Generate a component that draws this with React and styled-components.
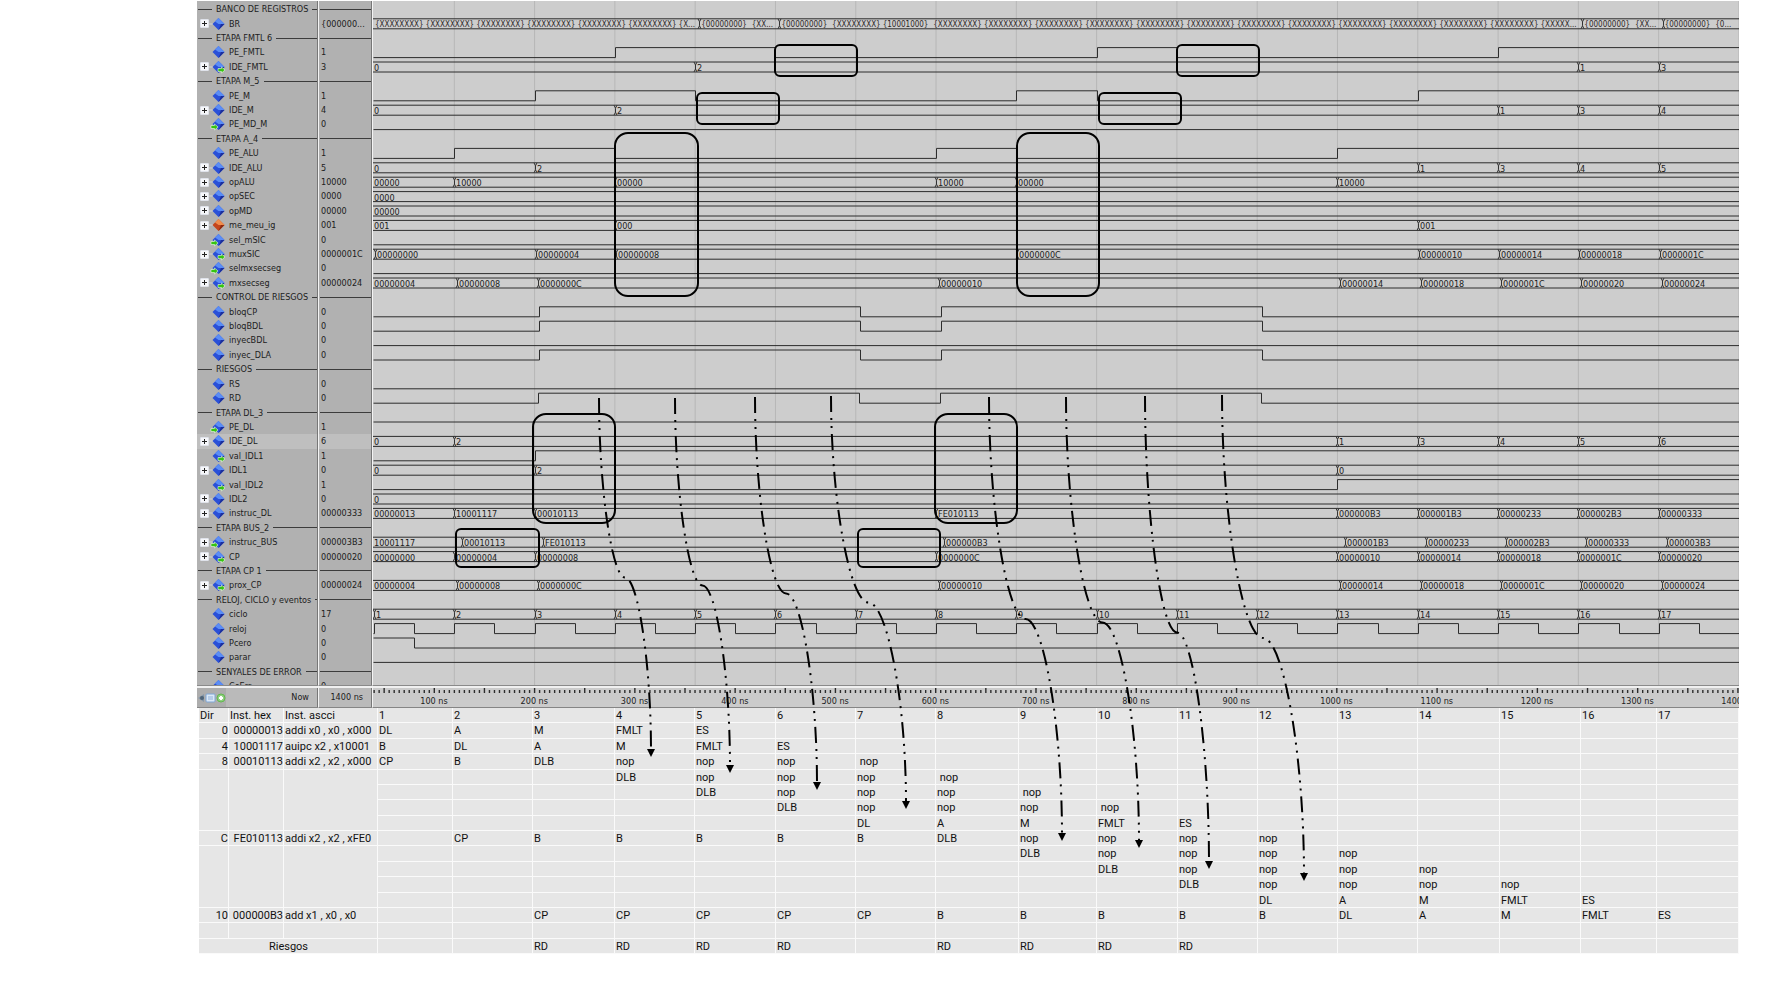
import React from "react";
import styled, { createGlobalStyle } from "styled-components";

const GlobalStyle = createGlobalStyle`
  * { box-sizing: border-box; }
  body { margin: 0; background: #ffffff; }
`;

const UI_FONT = '"DejaVu Sans Condensed", "DejaVu Sans", sans-serif';
const TABLE_FONT = 'Roboto, "Noto Sans", sans-serif';

const ROW_PITCH = 14.4;
const FIRST_HIGH = 3.4;
const CYCLE = 80.29;
const NS100 = 100.28;
const FAR = 4000;

const cycleX = (n) => 81.3 + CYCLE * (n - 2);

/* ---------- data ---------- */

const section = (name) => ({ kind: "section", name });
const bit = (name, value, start, edges = [], opts = {}) => ({ kind: "bit", name, value, start, edges, ...opts });
const bus = (name, value, first, changes = [], opts = {}) => ({ kind: "bus", name, value, first, changes, expand: true, ...opts });

const stall = [[3, 1], [7, 0], [8, 1], [12, 0]];
const pcNext = [[2, "00000008"], [3, "0000000C"], [8, "00000010"], [13, "00000014"], [14, "00000018"], [15, "0000001C"], [16, "00000020"], [17, "00000024"]];

const SIGNALS = [
  section("BANCO DE REGISTROS"),
  { kind: "bank", name: "BR", value: "{000000...", expand: true },
  section("ETAPA FMTL 6"),
  bit("PE_FMTL", "1", 0, [[4, 1], [6, 0], [10, 1], [11, 0], [15, 1]]),
  bus("IDE_FMTL", "3", "0", [[5, "2"], [16, "1"], [17, "3"]], { port: "out" }),
  section("ETAPA M_5"),
  bit("PE_M", "1", 0, [[3, 1], [5, 0], [9, 1], [10, 0], [14, 1]]),
  bus("IDE_M", "4", "0", [[4, "2"], [15, "1"], [16, "3"], [17, "4"]]),
  bit("PE_MD_M", "0", 0, [], { port: "in" }),
  section("ETAPA A_4"),
  bit("PE_ALU", "1", 0, [[2, 1], [4, 0], [8, 1], [9, 0], [13, 1]]),
  bus("IDE_ALU", "5", "0", [[3, "2"], [14, "1"], [15, "3"], [16, "4"], [17, "5"]]),
  bus("opALU", "10000", "00000", [[2, "10000"], [4, "00000"], [8, "10000"], [9, "00000"], [13, "10000"]]),
  bus("opSEC", "0000", "0000"),
  bus("opMD", "00000", "00000"),
  bus("me_meu_ig", "001", "001", [[4, "000"], [14, "001"]], { tone: "warm" }),
  bit("sel_mSIC", "0", 0, [], { port: "in" }),
  bus("muxSIC", "0000001C", "", [[1, "00000000"], [3, "00000004"], [4, "00000008"], [9, "0000000C"], [14, "00000010"], [15, "00000014"], [16, "00000018"], [17, "0000001C"]], { port: "out", delay: 1 }),
  bit("selmxsecseg", "0", 0, [], { port: "in" }),
  bus("mxsecseg", "00000024", "00000004", pcNext, { port: "out", delay: 3 }),
  section("CONTROL DE RIESGOS"),
  bit("bloqCP", "0", 0, stall, { delay: 5 }),
  bit("bloqBDL", "0", 0, stall, { delay: 5 }),
  bit("inyecBDL", "0", 0),
  bit("inyec_DLA", "0", 0, stall, { delay: 5 }),
  section("RIESGOS"),
  bit("RS", "0", 0),
  bit("RD", "0", 0, stall, { delay: 4 }),
  section("ETAPA DL_3"),
  bit("PE_DL", "1", 1, [], { port: "in" }),
  bus("IDE_DL", "6", "0", [[2, "2"], [13, "1"], [14, "3"], [15, "4"], [16, "5"], [17, "6"]], { selected: true }),
  bit("val_IDL1", "1", 0, [[3, 1]], { port: "out" }),
  bus("IDL1", "0", "0", [[3, "2"], [13, "0"]]),
  bit("val_IDL2", "1", 0, [[13, 1]], { port: "out" }),
  bus("IDL2", "0", "0"),
  bus("instruc_DL", "00000333", "00000013", [[2, "10001117"], [3, "00010113"], [8, "FE010113"], [13, "000000B3"], [14, "000001B3"], [15, "00000233"], [16, "000002B3"], [17, "00000333"]]),
  section("ETAPA BUS_2"),
  bus("instruc_BUS", "000003B3", "10001117", [[2, "00010113"], [3, "FE010113"], [8, "000000B3"], [13, "000001B3"], [14, "00000233"], [15, "000002B3"], [16, "00000333"], [17, "000003B3"]], { port: "in", delay: 8 }),
  bus("CP", "00000020", "00000000", [[2, "00000004"], [3, "00000008"], [8, "0000000C"], [13, "00000010"], [14, "00000014"], [15, "00000018"], [16, "0000001C"], [17, "00000020"]], { port: "out" }),
  section("ETAPA CP 1"),
  bus("prox_CP", "00000024", "00000004", pcNext, { port: "out", delay: 3 }),
  section("RELOJ, CICLO y eventos"),
  bus("ciclo", "17", "", Array.from({ length: 17 }, (_, i) => [i + 1, String(i + 1)]), { expand: false }),
  bit("reloj", "0", 0, Array.from({ length: 17 }, (_, i) => [[i + 1, 1], [i + 1.5, 0]]).flat()),
  bit("Pcero", "0", 1, [[1.5, 0]]),
  bit("parar", "0", 0),
  section("SENYALES DE ERROR"),
  { kind: "cut", name: "CoErr", value: "0" },
];

const X8 = "{XXXXXXXX}";
const BANK = [
  { x: 2, groups: [...Array(6).fill(X8), "{X..."] },
  { x: cycleX(5) + 4, groups: ["{00000000}", "{XX..."] },
  { x: cycleX(6) + 4, groups: ["{00000000}", X8, "{10001000}", ...Array(12).fill(X8), "{XXXXX..."] },
  { x: cycleX(16) + 4, groups: ["{00000000}", "{XX..."] },
  { x: cycleX(17) + 4, groups: ["{00000000}", "{0..."] },
];

const BOXES = [
  [578, 44, 82, 31, 5], [500, 92, 82, 31, 5], [418, 132, 83, 163, 13], [820, 132, 82, 163, 13],
  [902, 92, 82, 31, 5], [980, 44, 82, 31, 5], [336, 413, 82, 109, 13], [738, 413, 82, 109, 13],
  [259, 528, 83, 38, 5], [661, 528, 82, 38, 5],
];

const ARROWS = [
  [402, 397, 454, 756], [478, 397, 533, 772], [558, 396, 620, 789], [634, 395, 709, 808],
  [792, 396, 865, 840], [869, 396, 942, 847], [948, 395, 1012, 868], [1025, 394, 1107, 880],
];

const COLUMNS = [30, 55, 94, 75, 80, 82, 80, 81, 80, 80, 83, 78, 81, 80, 80, 80, 82, 81, 76, 0];

const line = (from, ...stages) => ({ from, stages });
const N = "\u00a0nop";
const PIPELINE = [
  { head: ["0", "00000013", "addi x0 , x0 , x000"], lines: [line(1, "DL", "A", "M", "FMLT", "ES")] },
  { head: ["4", "10001117", "auipc x2 , x10001"], lines: [line(1, "B", "DL", "A", "M", "FMLT", "ES")] },
  {
    head: ["8", "00010113", "addi x2 , x2 , x000"],
    lines: [
      line(1, "CP", "B", "DLB", "nop", "nop", "nop", N),
      line(4, "DLB", "nop", "nop", "nop", N),
      line(5, "DLB", "nop", "nop", "nop", N),
      line(6, "DLB", "nop", "nop", "nop", N),
      line(7, "DL", "A", "M", "FMLT", "ES"),
    ],
  },
  {
    head: ["C", "FE010113", "addi x2 , x2 , xFE0"],
    lines: [
      line(2, "CP", "B", "B", "B", "B", "B", "DLB", "nop", "nop", "nop", "nop"),
      line(9, "DLB", "nop", "nop", "nop", "nop"),
      line(10, "DLB", "nop", "nop", "nop", "nop"),
      line(11, "DLB", "nop", "nop", "nop", "nop"),
      line(12, "DL", "A", "M", "FMLT", "ES"),
    ],
  },
  { head: ["10", "000000B3", "add x1 , x0 , x0"], lines: [line(3, "CP", "CP", "CP", "CP", "CP", "B", "B", "B", "B", "B", "DL", "A", "M", "FMLT", "ES")] },
  { head: ["", "", ""], lines: [line(1)] },
];
const HAZARDS = [3, 4, 5, 6, 8, 9, 10, 11];

/* ---------- layout ---------- */

const Sheet = styled.main`
  position: relative;
  margin: 0 53px 0 197px;
  padding-top: 1px;
`;

const Viewer = styled.section`
  display: grid;
  grid-template-columns: 122px 54px minmax(0, 1fr);
  grid-template-rows: 684px 23px;
  font-family: ${UI_FONT};
  font-size: 9px;
  color: #1c1c1c;
`;

const Panel = styled.div`
  display: grid;
  grid-template-rows: repeat(47, minmax(0, 1fr)) 6px;
  padding-top: 1px;
  background: #b1b1b1;
  border-right: 1px solid #f4f4f4;
  box-shadow: inset -1px 0 #777777;
  line-height: 14px;
  overflow: hidden;
`;

const WavePanel = styled.div`
  background: #cdcdcd;
  overflow: hidden;
`;

const NameRow = styled.div`
  display: flex;
  align-items: center;
  padding-left: 3px;
  margin-right: 1px;
  white-space: nowrap;
  background: ${(p) => (p.$selected ? "#bfbfbf" : "transparent")};
`;

const ValueRow = styled.div`
  display: flex;
  align-items: center;
  padding-left: 2px;
  margin-right: 1px;
  white-space: nowrap;
  background: ${(p) => (p.$selected ? "#bfbfbf" : "transparent")};
`;

const SectionRow = styled.div`
  display: flex;
  align-items: center;
  gap: 4px;
  padding: 0 1px;
  white-space: nowrap;
  overflow: hidden;
`;

const Rule = styled.i`
  flex: ${(p) => (p.$lead ? "0 0 14px" : "1 1 0")};
  height: 1px;
  background: #3c3c3c;
`;

const CutRow = styled(NameRow)`
  align-items: flex-start;
  overflow: hidden;
`;

const CutValue = styled(ValueRow)`
  align-items: flex-start;
  overflow: hidden;
`;

const Expander = styled.button`
  position: relative;
  flex: none;
  width: 9px;
  height: 9px;
  padding: 0;
  border: 1px solid #dfe2ea;
  border-radius: 1px;
  background: #f6f7fa;
  visibility: ${(p) => (p.$shown ? "visible" : "hidden")};
  &::before,
  &::after {
    content: "";
    position: absolute;
    background: #222222;
  }
  &::before { left: 1px; right: 1px; top: 3px; height: 1px; }
  &::after { top: 1px; bottom: 1px; left: 3px; width: 1px; }
`;

const Glyph = styled.svg`
  display: block;
  flex: none;
  margin-right: ${(p) => p.$gap || 0}px;
`;

const Footer = styled.div`
  display: flex;
  align-items: center;
  border-top: 1px solid #8a8a8a;
  border-bottom: 1px solid #858585;
  border-right: ${(p) => (p.$last ? "0" : "1px solid #f4f4f4")};
  background: ${(p) => (p.$last ? "#cbcbcb" : "#bababa")};
  box-shadow: inset 0 2px #f0f0f0, inset ${(p) => (p.$last ? "0" : "-1px")} 0 #777777;
  justify-content: ${(p) => (p.$last ? "flex-start" : "space-between")};
  padding: ${(p) => (p.$last ? "0" : "0 9px 0 0")};
  overflow: hidden;
`;

const Tools = styled.div`
  display: flex;
  align-self: stretch;
  align-items: center;
  margin-top: 2px;
  width: 29px;
  background: #adadad;
`;

const Now = styled.span`
  white-space: nowrap;
`;

const End = styled.span`
  flex: 1;
  text-align: right;
  white-space: nowrap;
`;

const Canvas = styled.svg`
  display: block;
  width: 100%;
  height: ${(p) => p.$height}px;
`;

const Overlay = styled.svg`
  position: absolute;
  top: 1px;
  left: 0;
  width: 100%;
  height: 900px;
  pointer-events: none;
`;

const Table = styled.table`
  width: calc(100% - 2px);
  height: 246px;
  margin-left: 2px;
  table-layout: fixed;
  border-collapse: separate;
  border-spacing: 0;
  background: #e6e6e6;
  font-family: ${TABLE_FONT};
  font-size: 11px;
  line-height: 13px;
  color: #111111;
`;

const Line = styled.tr`
  height: 15px;
`;

const Cell = styled.td`
  padding: 1px 0 0 1px;
  border-right: 1px solid #fafafa;
  border-bottom: 1px solid #fafafa;
  font-weight: 400;
  vertical-align: top;
  white-space: nowrap;
  text-align: ${(p) => p.$align || "left"};
`;

/* ---------- drawings ---------- */

function Diamond({ tone, port, linked }) {
  const warm = tone === "warm";
  return (
    <Glyph $gap={3} width="17" height="14" viewBox="0 0 17 14" aria-hidden="true">
      {linked && <path d="M0 7H4" stroke="#d4d4d4" />}
      <path d="M9.5 1L15.5 7L9.5 13L3.5 7Z" fill={warm ? "#c4451c" : "#2a50d8"} />
      <path d="M9.5 1L15.5 7H9.5L6 4.500Z" fill={warm ? "#ef8d4e" : "#5b8df5"} />
      <path d="M9.500 13L15.500 7H12Z" fill={warm ? "#8c2a10" : "#1c2f9c"} />
      {port && (
        <path
          transform={port === "out" ? "translate(9 7)" : "translate(2 7)"}
          d="M0 1.500H3.500V0L7 3L3.500 6V4.500H0Z"
          fill="#35c411"
          stroke="#eef8e8"
          strokeWidth="0.6"
        />
      )}
    </Glyph>
  );
}

function BitWave({ row, high }) {
  const y = (v) => high + (v ? 0 : 10);
  let d = `M0.5 ${y(row.start)}`;
  row.edges.forEach(([c, v]) => {
    const x = Math.floor(cycleX(c) + (row.delay || 0.5)) + 0.5;
    d += `H${x}V${y(v)}`;
  });
  return <path d={`${d}H${FAR}`} fill="none" stroke="#2c2c2c" />;
}

function Crossing({ x, high }) {
  return (
    <path
      d={`M${x - 1} ${high}L${x + 0.5} ${high + 3}V${high + 7}L${x - 1} ${high + 10}M${x + 2} ${high}L${x + 0.5} ${high + 3}M${x + 0.5} ${high + 7}L${x + 2} ${high + 10}`}
      fill="none"
      stroke="#333333"
    />
  );
}

function BusWave({ row, high }) {
  return (
    <g>
      <path d={`M0 ${high}H${FAR}M0 ${high + 10}H${FAR}`} stroke="#2c2c2c" />
      {row.first && <text x="1" y={high + 9}>{row.first}</text>}
      {row.changes.map(([c, label]) => {
        const x = Math.round(cycleX(c) + (row.delay || 0));
        return (
          <g key={c}>
            <Crossing x={x} high={high} />
            <text x={x + 2} y={high + 9}>{label}</text>
          </g>
        );
      })}
    </g>
  );
}

function BankWave({ high }) {
  return (
    <g fill="#2e2828" fontSize="8">
      <path d={`M0 ${high}H${FAR}M0 ${high + 10}H${FAR}`} stroke="#2c2c2c" />
      {BANK.map((seg, s) => (
        <g key={s}>
          {s > 0 && <Crossing x={Math.round(seg.x)} high={high} />}
          {seg.groups.map((g, i) => (
            <text key={i} x={seg.x + (s > 0 ? 2 : 0) + i * 50.6} y={high + 8}>{g}</text>
          ))}
        </g>
      ))}
    </g>
  );
}

function Waves() {
  return (
    <Canvas $height={684} role="img" aria-label="Cronograma" fontSize="9" fill="#1c1c1c">
      {Array.from({ length: 17 }, (_, i) => (
        <path key={i} d={`M${cycleX(i + 2)} 0V684`} stroke="#b7b7b7" />
      ))}
      {SIGNALS.map((row, i) => {
        const high = Math.round((FIRST_HIGH + ROW_PITCH * i) * 10) / 10;
        if (row.kind === "bit") return <BitWave key={i} row={row} high={high} />;
        if (row.kind === "bus") return <BusWave key={i} row={row} high={high} />;
        if (row.kind === "bank") return <BankWave key={i} high={high} />;
        return null;
      })}
    </Canvas>
  );
}

function TimeAxis() {
  const ticks = [];
  for (let ns = 40; ns <= 1400; ns += 5) {
    const x = 61.3 + ((ns - 100) / 100) * NS100;
    ticks.push(<path key={ns} d={`M${x} ${ns % 50 === 0 ? 2 : 4}V7`} stroke="#2c2c2c" strokeWidth="1.4" />);
  }
  return (
    <Canvas $height={21} role="img" aria-label="Tiempo" fontSize="9" fill="#1c1c1c">
      {ticks}
      {Array.from({ length: 14 }, (_, i) => (
        <text key={i} x={61 + i * NS100} y="18" textAnchor="middle">{(i + 1) * 100} ns</text>
      ))}
    </Canvas>
  );
}

function Annotations() {
  return (
    <Overlay aria-hidden="true" fill="none" stroke="#000000" strokeWidth="2">
      {BOXES.map(([x, y, w, h, r]) => (
        <rect key={`${x}-${y}`} x={x} y={y} width={w} height={h} rx={r} />
      ))}
      {ARROWS.map(([x0, y0, x1, y1]) => {
        const w = x1 - x0;
        const xm = x0 + w / 2;
        const tail = y1 - 7;
        const ym = (y0 + y1) / 2;
        return (
          <g key={x0}>
            <path
              d={`M${x0} ${y0}C${x0} ${(y0 + ym) / 2} ${x0 + w / 4} ${ym} ${xm} ${ym}S${x1} ${(ym + tail) / 2} ${x1} ${tail}`}
              strokeDasharray="16 6 2 6 2 6"
            />
            <path d={`M${x1 - 4} ${y1 - 8}H${x1 + 4}L${x1} ${y1}Z`} fill="#000000" stroke="none" />
          </g>
        );
      })}
    </Overlay>
  );
}

function ToolIcons() {
  return (
    <Tools>
      <Glyph width="29" height="14" viewBox="0 0 29 14" aria-hidden="true">
        <path d="M1 7L7 3V11Z" fill="#8597a8" />
        <circle cx="5" cy="7" r="2" fill="#4f6478" />
        <rect x="9" y="3" width="9" height="8" rx="1" fill="#dbe8f6" stroke="#7fa6d6" />
        <path d="M11 6H16M11 8H16" stroke="#8fb0da" />
        <circle cx="24" cy="7" r="4" fill="#8fd07f" stroke="#62b84f" />
        <path d="M24 5V9M22 7H26" stroke="#ffffff" strokeWidth="2" />
      </Glyph>
    </Tools>
  );
}

/* ---------- parts ---------- */

function Names() {
  return (
    <Panel>
      {SIGNALS.map((row) => {
        if (row.kind === "section") {
          return (
            <SectionRow key={row.name}>
              <Rule $lead />
              {row.name}
              <Rule />
            </SectionRow>
          );
        }
        const Row = row.kind === "cut" ? CutRow : NameRow;
        return (
          <Row key={row.name} $selected={row.selected}>
            <Expander type="button" $shown={row.expand} aria-label={`Expandir ${row.name}`} />
            <Diamond tone={row.tone} port={row.port} linked={row.expand} />
            {row.name}
          </Row>
        );
      })}
    </Panel>
  );
}

function Values() {
  return (
    <Panel>
      {SIGNALS.map((row) => {
        if (row.kind === "section") return <SectionRow key={row.name}><Rule /></SectionRow>;
        const Row = row.kind === "cut" ? CutValue : ValueRow;
        return <Row key={row.name} $selected={row.selected}>{row.value}</Row>;
      })}
    </Panel>
  );
}

const CYCLES = Array.from({ length: 17 }, (_, i) => i + 1);

function PipelineTable() {
  return (
    <Table>
      <colgroup>
        {COLUMNS.map((w, i) => <col key={i} style={w ? { width: w } : undefined} />)}
      </colgroup>
      <tbody>
        <Line>
          <Cell as="th" scope="col">Dir</Cell>
          <Cell as="th" scope="col">Inst. hex</Cell>
          <Cell as="th" scope="col">Inst. ascci</Cell>
          {CYCLES.map((c) => <Cell as="th" scope="col" key={c}>{c}</Cell>)}
        </Line>
        {PIPELINE.map((group, g) => group.lines.map((l, k) => (
          <Line key={`${g}-${k}`}>
            {k === 0 && group.head.map((h, i) => (
              <Cell key={`h${i}`} $align={i < 2 ? "right" : "left"}>{h}</Cell>
            ))}
            {k === 1 && [0, 1, 2].map((i) => <Cell key={`b${i}`} rowSpan={group.lines.length - 1} />)}
            {CYCLES.map((c) => <Cell key={c}>{l.stages[c - l.from]}</Cell>)}
          </Line>
        )))}
        <Line>
          <Cell as="th" scope="row" colSpan={3} $align="center">Riesgos</Cell>
          {CYCLES.map((c) => <Cell key={c}>{HAZARDS.includes(c) ? "RD" : ""}</Cell>)}
        </Line>
      </tbody>
    </Table>
  );
}

export default function App() {
  return (
    <>
      <GlobalStyle />
      <Sheet>
        <Viewer>
          <Names />
          <Values />
          <WavePanel><Waves /></WavePanel>
          <Footer><ToolIcons /><Now>Now</Now></Footer>
          <Footer><End>1400 ns</End></Footer>
          <Footer $last><TimeAxis /></Footer>
        </Viewer>
        <PipelineTable />
        <Annotations />
      </Sheet>
    </>
  );
}
